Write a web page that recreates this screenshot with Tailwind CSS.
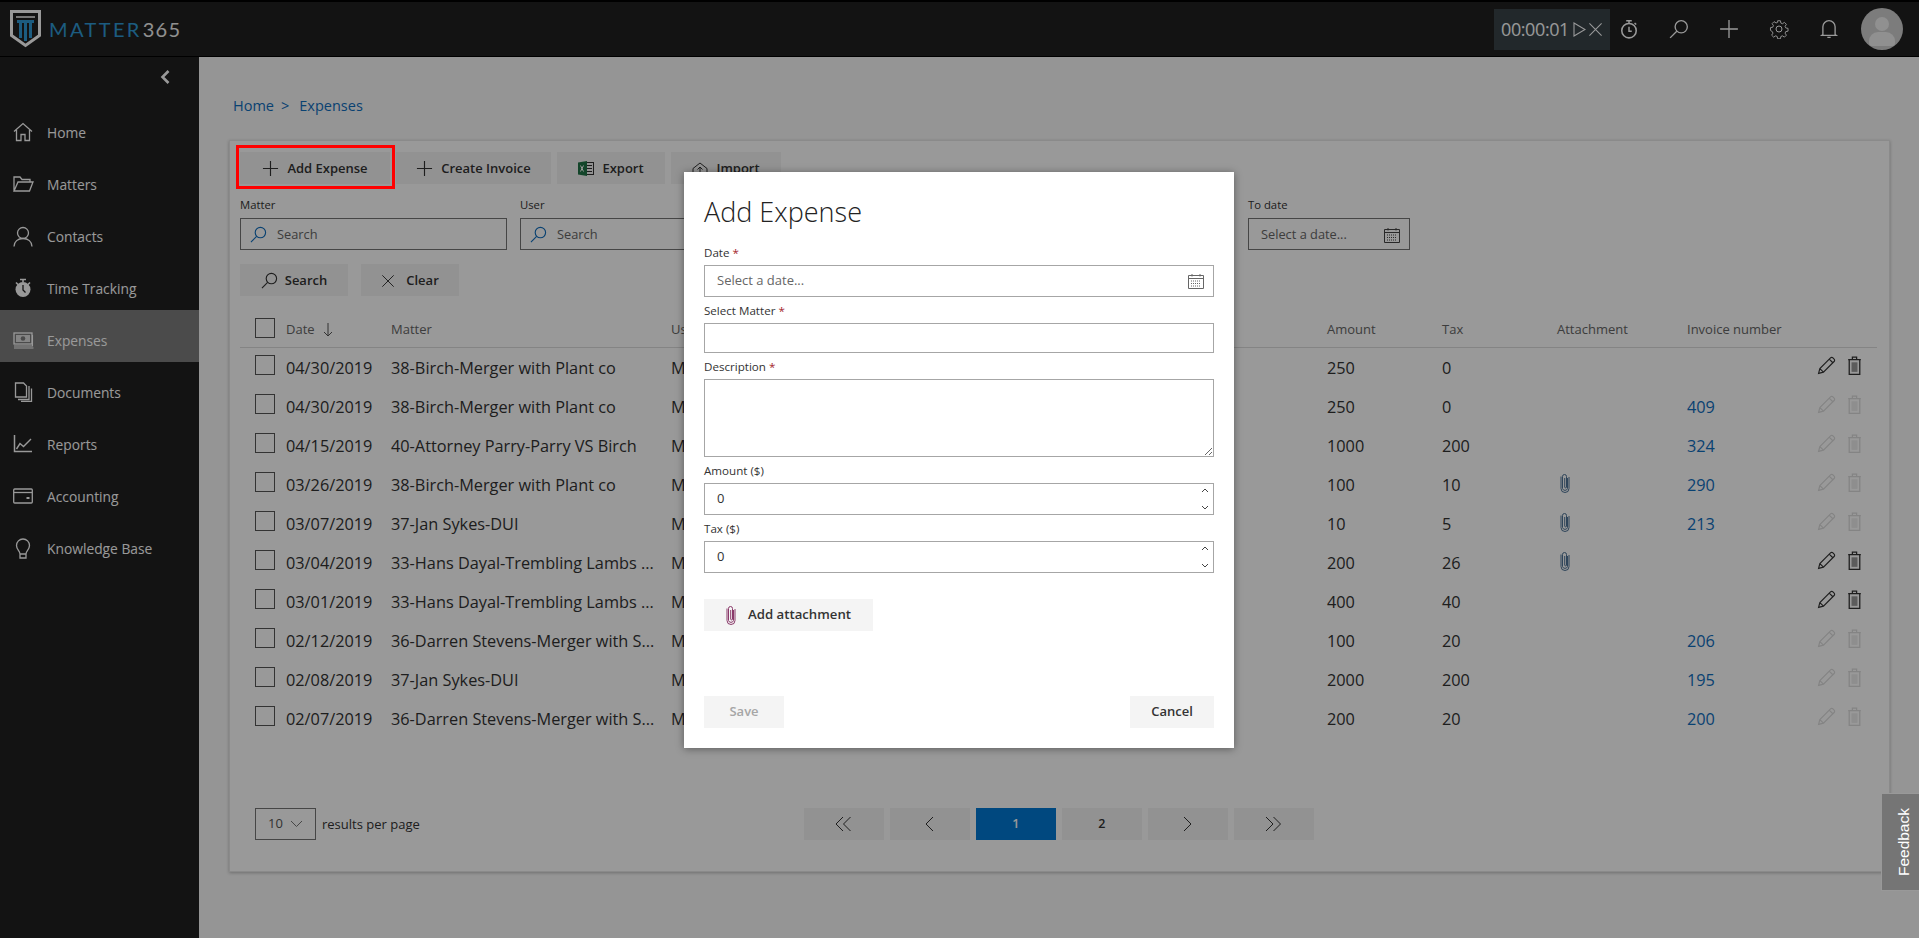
<!DOCTYPE html>
<html lang="en">
<head>
<meta charset="utf-8">
<title>Matter365 Expenses</title>
<script src="https://cdn.jsdelivr.net/npm/@tailwindcss/browser@4"></script>
</head>
<body class="m-0 overflow-hidden">
<svg class="hidden" width="0" height="0">
  <symbol id="pencil" viewBox="0 0 18 18"><path d="M1.500 16.500l1.200-4.600L12.800 1.800a1.600 1.600 0 0 1 2.300 0l1.100 1.100a1.600 1.600 0 0 1 0 2.300L6.100 15.300zM2.700 11.900l3.400 3.400M11.600 3l3.400 3.400" fill="none" stroke="currentColor" stroke-width="1.100"/></symbol>
  <symbol id="trash" viewBox="0 0 14 18"><path d="M1 3.500h12M5 3.500V1h4v2.500M2 3.500v14h10v-14" fill="none" stroke="currentColor" stroke-width="1.200"/><rect x="4.200" y="6" width="5.600" height="9" fill="currentColor" opacity=".5"/></symbol>
  <symbol id="clip" viewBox="0 0 10 20"><path d="M7.500 5v10.500a2.600 2.600 0 0 1-5 0V3.500a2 2 0 0 1 4 0V14a.9.9 0 0 1-1.800 0V5M9 4v11.500a4 4 0 0 1-8 0V3.500" fill="none" stroke="currentColor" stroke-width="1"/></symbol>
  <symbol id="loupe" viewBox="0 0 18 18"><circle cx="11" cy="7" r="5.500" fill="none" stroke="currentColor" stroke-width="1.200"/><path d="M7 11L1 17" fill="none" stroke="currentColor" stroke-width="1.200"/></symbol>
  <symbol id="plus" viewBox="0 0 18 18"><path d="M9 1v16M1 9h16" fill="none" stroke="currentColor" stroke-width="1.200"/></symbol>
  <symbol id="cal" viewBox="0 0 16 16"><path d="M.5 2.500h15v13H.5zM.5 5.500h15M4 1v2.500M12 1v2.500" fill="none" stroke="currentColor"/><path d="M3 8h10M3 10.500h10M3 13h10" fill="none" stroke="currentColor" stroke-dasharray="1 1"/></symbol>
  <symbol id="xmark" viewBox="0 0 16 16"><path d="M1.500 1.500l13 13M14.500 1.500l-13 13" fill="none" stroke="currentColor" stroke-width="1.100"/></symbol>
</svg>

<div class="relative flex flex-col w-[1919px] h-[938px] font-['Open_Sans',sans-serif] text-[#333] bg-[#f8f8f8]">
  <!-- header -->
  <header class="flex items-center h-[57px] shrink-0 bg-[#212121] border-t-2 border-b border-t-[#000] border-b-[#000] pl-[10px]">
    <svg width="31" height="38" viewBox="0 0 31 38" class="shrink-0">
      <path d="M1.500 1.500h28v24l-14 10-14-10z" fill="none" stroke="#fff" stroke-width="3"/>
      <path d="M6 7h19" stroke="#fff" stroke-width="1.500"/>
      <path d="M7 10h17v3H7zM9 13h3v15H9zM14 13h3v18h-3zM19 13h3v15h-3z" fill="#2f9ad6"/>
    </svg>
    <div class="flex items-center ml-[8px] font-['Lato',sans-serif] text-[20px] tracking-[2.400px] leading-none">
      <span class="text-[#2f9ad6]">MATTER</span><span class="text-[#f0f0f0] ml-[1px] tracking-[1.200px]">365</span>
    </div>
    <div class="ml-auto flex items-center h-[41px] w-[116px] bg-[#394349] text-[#ffffff] pl-[7px] mr-[9px]">
      <span class="text-[18px] tracking-[-0.400px]">00:00:01</span>
      <svg width="13" height="15" viewBox="0 0 13 15" class="ml-[4px]"><path d="M1 1l11 6.500L1 14z" fill="none" stroke="#fff" stroke-width="1.100"/></svg>
      <svg width="15" height="15" class="ml-[2px] text-white"><use href="#xmark"/></svg>
    </div>
    <div class="flex items-center gap-[30px] text-white mr-[22px]">
      <svg width="20" height="20" viewBox="0 0 18 18"><circle cx="9" cy="10.500" r="6.500" fill="none" stroke="currentColor" stroke-width="1.400"/><path d="M6.500 1.500h5M9 1.500V4M9 7v4h2.500M14 3.500l1.500 1.500" fill="none" stroke="currentColor" stroke-width="1.300"/></svg>
      <svg width="20" height="20"><use href="#loupe"/></svg>
      <svg width="20" height="20"><use href="#plus"/></svg>
      <svg width="20" height="20" viewBox="0 0 20 20"><circle cx="10" cy="10" r="3" fill="none" stroke="currentColor"/><path d="M8.500 1h3l.5 2.500 1.700.7 2.200-1.400 2.100 2.100-1.400 2.200.7 1.700 2.500.5v3l-2.500.5-.7 1.700 1.400 2.200-2.100 2.100-2.200-1.400-1.700.7-.5 2.500h-3l-.5-2.500-1.700-.7-2.200 1.400-2.100-2.100 1.400-2.200-.7-1.700L.7 11.500v-3l2.500-.5.7-1.700-1.400-2.200 2.100-2.100 2.200 1.400 1.700-.7z" fill="none" stroke="currentColor" transform="scale(.92) translate(.9 .9)"/></svg>
      <svg width="20" height="20" viewBox="0 0 18 18"><path d="M3.500 14V7a5.500 5.500 0 0 1 11 0v7l1 .8h-13zM7.500 16.500h3" fill="none" stroke="currentColor" stroke-width="1.200"/></svg>
    </div>
    <div class="relative w-[42px] h-[42px] rounded-full bg-[#cfcfcf] overflow-hidden mr-[16px]">
      <div class="absolute left-[14px] top-[9px] w-[14px] h-[14px] rounded-full bg-[#f0f0f0]"></div>
      <div class="absolute left-[8px] top-[24px] w-[26px] h-[14px] rounded-t-[9px] rounded-b-[3px] bg-[#f0f0f0]"></div>
    </div>
  </header>

  <div class="flex flex-1 min-h-0">
    <!-- sidebar -->
    <aside class="w-[199px] shrink-0 bg-[#212121] text-white text-[13.800px]">
      <div class="flex justify-end h-[45px] pt-[12px] pr-[28px]">
        <svg width="12" height="16" viewBox="0 0 12 16"><path d="M9.500 2L3.500 8l6 6" fill="none" stroke="#fff" stroke-width="2.600"/></svg>
      </div>
      <nav class="flex flex-col">
        <a class="flex items-center h-[52px] pl-[13px] pt-[10px]"><svg width="20" height="20" viewBox="0 0 20 20" class="mr-[14px] -mt-[2px]"><path d="M1 9.500L10 1.500l9 8M3.500 8v10.500h4.500v-6h4v6h4.500V8" fill="none" stroke="#fff" stroke-width="1.300"/></svg>Home</a>
        <a class="flex items-center h-[52px] pl-[13px] pt-[10px]"><svg width="21" height="18" viewBox="0 0 21 18" class="mr-[13px] -mt-[2px]"><path d="M1 16V2h6l2 2.500h8V7M1 16h15.500L20 7H5z" fill="none" stroke="#fff" stroke-width="1.300"/></svg>Matters</a>
        <a class="flex items-center h-[52px] pl-[13px] pt-[10px]"><svg width="20" height="21" viewBox="0 0 20 21" class="mr-[14px] -mt-[2px]"><circle cx="10" cy="7" r="5.500" fill="none" stroke="#fff" stroke-width="1.300"/><path d="M1 20.500c0-5 4-8 9-8s9 3 9 8" fill="none" stroke="#fff" stroke-width="1.300"/></svg>Contacts</a>
        <a class="flex items-center h-[52px] pl-[13px] pt-[10px]"><svg width="20" height="20" viewBox="0 0 20 20" class="mr-[14px] -mt-[2px]"><circle cx="10" cy="11.500" r="7.500" fill="#fff"/><path d="M7 1.500h6M10 1.500V4M3 4.500l2 2M17 4.500l-2 2" stroke="#fff" stroke-width="1.600"/><path d="M10 7v5l2.500 2.500" fill="none" stroke="#212121" stroke-width="1.300"/></svg>Time Tracking</a>
        <a class="flex items-center h-[52px] pl-[13px] pt-[10px] bg-[#7d7d7d]"><svg width="21" height="17" viewBox="0 0 21 17" class="mr-[13px] -mt-[2px]"><rect x="1" y="1" width="18" height="11" fill="none" stroke="#fff" stroke-width="1.300"/><rect x="3" y="3" width="14" height="7" fill="#fff" opacity=".75"/><circle cx="10" cy="6.500" r="2.300" fill="#7d7d7d"/><path d="M1 14h18.500V3M1 16h19.500" fill="none" stroke="#fff" stroke-width="1.100"/></svg>Expenses</a>
        <a class="flex items-center h-[52px] pl-[13px] pt-[10px]"><svg width="20" height="20" viewBox="0 0 20 20" class="mr-[14px] -mt-[2px]"><path d="M2.500 1h8l3 3v11h-11zM16 4v13.500H5M18.500 6.500V19.500H8" fill="none" stroke="#fff" stroke-width="1.300"/></svg>Documents</a>
        <a class="flex items-center h-[52px] pl-[13px] pt-[10px]"><svg width="20" height="20" viewBox="0 0 20 20" class="mr-[14px] -mt-[2px]"><path d="M1.500 1v16.500H19" fill="none" stroke="#fff" stroke-width="1.500"/><path d="M3.500 15l3.500-5.500 3.500 3L18 5" fill="none" stroke="#fff" stroke-width="1.400"/></svg>Reports</a>
        <a class="flex items-center h-[52px] pl-[13px] pt-[10px]"><svg width="20" height="16" viewBox="0 0 20 16" class="mr-[14px] -mt-[2px]"><rect x=".7" y="1" width="18.600" height="14" rx="1" fill="none" stroke="#fff" stroke-width="1.300"/><path d="M1 4.500h18" stroke="#fff" stroke-width="1.300"/><rect x="13.500" y="9" width="3" height="2" fill="#fff"/></svg>Accounting</a>
        <a class="flex items-center h-[52px] pl-[13px] pt-[10px]"><svg width="20" height="21" viewBox="0 0 20 21" class="mr-[14px] -mt-[2px]"><path d="M7 16c0-3-3.500-4.500-3.500-8.500a6.500 6.500 0 0 1 13 0C16.500 11.500 13 13 13 16zM7 16v4h6v-4" fill="none" stroke="#fff" stroke-width="1.300"/></svg>Knowledge Base</a>
      </nav>
    </aside>

    <!-- main -->
    <main class="flex-1 min-w-0 pl-[30px] pt-[37px]">
      <div class="flex pl-[4px] h-[24px] items-center text-[14.500px] text-[#106ebe]"><span>Home</span><span class="ml-[7px]">&gt;</span><span class="ml-[10px]">Expenses</span></div>
      <section class="mt-[22px] w-[1661px] h-[732px] bg-white border border-[#e6e6e6] shadow-[0_1px_3px_rgba(0,0,0,.25)] pt-[11px] pl-[10px]">
        <div class="flex gap-[6px] text-[13px] font-semibold">
          <button class="flex items-center justify-center gap-[8px] w-[150px] h-[32px] pt-[1px] bg-[#f4f4f4]"><svg width="17" height="17" class="text-[#333]"><use href="#plus"/></svg>Add Expense</button>
          <button class="flex items-center justify-center gap-[8px] w-[155px] h-[32px] pt-[1px] bg-[#f4f4f4]"><svg width="17" height="17" class="text-[#333]"><use href="#plus"/></svg>Create Invoice</button>
          <button class="flex items-center justify-center gap-[8px] w-[108px] h-[32px] pt-[1px] bg-[#f4f4f4]"><svg width="16" height="15" viewBox="0 0 16 15"><rect x="6" y="1.500" width="9.500" height="12" fill="none" stroke="#333"/><path d="M9 4.500h5M9 7.500h5M9 10.500h5" stroke="#333"/><path d="M0 1.500l9-1.500v15l-9-1.500z" fill="#217346"/><path d="M2.500 4.500l3 6M5.500 4.500l-3 6" stroke="#fff"/></svg>Export</button>
          <button class="flex items-center justify-center gap-[8px] w-[110px] h-[32px] pt-[1px] bg-[#f4f4f4]"><svg width="16" height="14" viewBox="0 0 16 14"><path d="M1 6.500L8 1l7 5.500v6.500H1zM8 11V5M5.500 7.500L8 5l2.500 2.500" fill="none" stroke="#333"/></svg>Import</button>
        </div>
        <div class="flex mt-[8px]">
          <div class="w-[267px]">
            <div class="h-[26px] flex items-center text-[11.300px]">Matter</div>
            <div class="flex items-center h-[32px] border border-[#767676] pl-[9px] pt-[1px] text-[12.800px] text-[#666]"><svg width="17" height="17" class="text-[#106ebe] mr-[10px]"><use href="#loupe"/></svg>Search</div>
          </div>
          <div class="w-[267px] ml-[13px]">
            <div class="h-[26px] flex items-center text-[11.300px]">User</div>
            <div class="flex items-center h-[32px] border border-[#767676] pl-[9px] pt-[1px] text-[12.800px] text-[#666]"><svg width="17" height="17" class="text-[#106ebe] mr-[10px]"><use href="#loupe"/></svg>Search</div>
          </div>
          <div class="w-[162px] ml-[461px]">
            <div class="h-[26px] flex items-center text-[11.300px]">To date</div>
            <div class="flex items-center justify-between h-[32px] border border-[#767676] pl-[12px] pr-[9px] pt-[1px] text-[12.800px] text-[#666]">Select a date...<svg width="16" height="16" class="text-[#444]"><use href="#cal"/></svg></div>
          </div>
        </div>
        <div class="flex gap-[13px] mt-[14px] text-[13px] font-semibold">
          <button class="flex items-center justify-center gap-[7px] w-[108px] h-[32px] pt-[1px] bg-[#f4f4f4]"><svg width="17" height="17" class="text-[#333]"><use href="#loupe"/></svg>Search</button>
          <button class="flex items-center justify-center gap-[11px] w-[98px] h-[32px] pt-[1px] bg-[#f4f4f4]"><svg width="14" height="14" class="text-[#333]"><use href="#xmark"/></svg>Clear</button>
        </div>

        <!-- table -->
        <div class="mt-[13px] w-[1637px] text-[16.300px]">
          <div class="grid grid-cols-[31px_105px_280px_656px_115px_115px_130px_130px_60px] items-center h-[39px] border-b border-[#dcdcdc] pl-[15px] pt-[3px] text-[13px] text-[#666]">
            <span class="w-[20px] h-[20px] border border-[#555] bg-white -mt-[3px]"></span>
            <span class="flex items-center gap-[8px]">Date <svg width="10" height="15" viewBox="0 0 10 15"><path d="M5 1v13M1 10l4 4 4-4" fill="none" stroke="#555"/></svg></span>
            <span>Matter</span><span>Us</span><span>Amount</span><span>Tax</span><span>Attachment</span><span>Invoice number</span><span></span>
          </div>
          <div class="grid grid-cols-[31px_105px_280px_656px_115px_115px_130px_130px_60px] items-center h-[39px] pl-[15px] pt-[2px]"><span class="w-[20px] h-[20px] border border-[#555] bg-white -mt-[7px]"></span><span>04/30/2019</span><span>38-Birch-Merger with Plant co</span><span>M</span><span>250</span><span>0</span><span></span><span></span><span class="flex items-center gap-[11px] text-[#333] -mt-[7px]"><svg width="19" height="19"><use href="#pencil"/></svg><svg width="15" height="19"><use href="#trash"/></svg></span></div>
          <div class="grid grid-cols-[31px_105px_280px_656px_115px_115px_130px_130px_60px] items-center h-[39px] pl-[15px] pt-[2px]"><span class="w-[20px] h-[20px] border border-[#555] bg-white -mt-[7px]"></span><span>04/30/2019</span><span>38-Birch-Merger with Plant co</span><span>M</span><span>250</span><span>0</span><span></span><span class="text-[#106ebe]">409</span><span class="flex items-center gap-[11px] text-[#dcdcdc] -mt-[7px]"><svg width="19" height="19"><use href="#pencil"/></svg><svg width="15" height="19"><use href="#trash"/></svg></span></div>
          <div class="grid grid-cols-[31px_105px_280px_656px_115px_115px_130px_130px_60px] items-center h-[39px] pl-[15px] pt-[2px]"><span class="w-[20px] h-[20px] border border-[#555] bg-white -mt-[7px]"></span><span>04/15/2019</span><span>40-Attorney Parry-Parry VS Birch</span><span>M</span><span>1000</span><span>200</span><span></span><span class="text-[#106ebe]">324</span><span class="flex items-center gap-[11px] text-[#dcdcdc] -mt-[7px]"><svg width="19" height="19"><use href="#pencil"/></svg><svg width="15" height="19"><use href="#trash"/></svg></span></div>
          <div class="grid grid-cols-[31px_105px_280px_656px_115px_115px_130px_130px_60px] items-center h-[39px] pl-[15px] pt-[2px]"><span class="w-[20px] h-[20px] border border-[#555] bg-white -mt-[7px]"></span><span>03/26/2019</span><span>38-Birch-Merger with Plant co</span><span>M</span><span>100</span><span>10</span><svg width="10" height="20" class="ml-[3px] -mt-[5px] text-[#4f7396]"><use href="#clip"/></svg><span class="text-[#106ebe]">290</span><span class="flex items-center gap-[11px] text-[#dcdcdc] -mt-[7px]"><svg width="19" height="19"><use href="#pencil"/></svg><svg width="15" height="19"><use href="#trash"/></svg></span></div>
          <div class="grid grid-cols-[31px_105px_280px_656px_115px_115px_130px_130px_60px] items-center h-[39px] pl-[15px] pt-[2px]"><span class="w-[20px] h-[20px] border border-[#555] bg-white -mt-[7px]"></span><span>03/07/2019</span><span>37-Jan Sykes-DUI</span><span>M</span><span>10</span><span>5</span><svg width="10" height="20" class="ml-[3px] -mt-[5px] text-[#4f7396]"><use href="#clip"/></svg><span class="text-[#106ebe]">213</span><span class="flex items-center gap-[11px] text-[#dcdcdc] -mt-[7px]"><svg width="19" height="19"><use href="#pencil"/></svg><svg width="15" height="19"><use href="#trash"/></svg></span></div>
          <div class="grid grid-cols-[31px_105px_280px_656px_115px_115px_130px_130px_60px] items-center h-[39px] pl-[15px] pt-[2px]"><span class="w-[20px] h-[20px] border border-[#555] bg-white -mt-[7px]"></span><span>03/04/2019</span><span>33-Hans Dayal-Trembling Lambs ...</span><span>M</span><span>200</span><span>26</span><svg width="10" height="20" class="ml-[3px] -mt-[5px] text-[#4f7396]"><use href="#clip"/></svg><span></span><span class="flex items-center gap-[11px] text-[#333] -mt-[7px]"><svg width="19" height="19"><use href="#pencil"/></svg><svg width="15" height="19"><use href="#trash"/></svg></span></div>
          <div class="grid grid-cols-[31px_105px_280px_656px_115px_115px_130px_130px_60px] items-center h-[39px] pl-[15px] pt-[2px]"><span class="w-[20px] h-[20px] border border-[#555] bg-white -mt-[7px]"></span><span>03/01/2019</span><span>33-Hans Dayal-Trembling Lambs ...</span><span>M</span><span>400</span><span>40</span><span></span><span></span><span class="flex items-center gap-[11px] text-[#333] -mt-[7px]"><svg width="19" height="19"><use href="#pencil"/></svg><svg width="15" height="19"><use href="#trash"/></svg></span></div>
          <div class="grid grid-cols-[31px_105px_280px_656px_115px_115px_130px_130px_60px] items-center h-[39px] pl-[15px] pt-[2px]"><span class="w-[20px] h-[20px] border border-[#555] bg-white -mt-[7px]"></span><span>02/12/2019</span><span>36-Darren Stevens-Merger with S...</span><span>M</span><span>100</span><span>20</span><span></span><span class="text-[#106ebe]">206</span><span class="flex items-center gap-[11px] text-[#dcdcdc] -mt-[7px]"><svg width="19" height="19"><use href="#pencil"/></svg><svg width="15" height="19"><use href="#trash"/></svg></span></div>
          <div class="grid grid-cols-[31px_105px_280px_656px_115px_115px_130px_130px_60px] items-center h-[39px] pl-[15px] pt-[2px]"><span class="w-[20px] h-[20px] border border-[#555] bg-white -mt-[7px]"></span><span>02/08/2019</span><span>37-Jan Sykes-DUI</span><span>M</span><span>2000</span><span>200</span><span></span><span class="text-[#106ebe]">195</span><span class="flex items-center gap-[11px] text-[#dcdcdc] -mt-[7px]"><svg width="19" height="19"><use href="#pencil"/></svg><svg width="15" height="19"><use href="#trash"/></svg></span></div>
          <div class="grid grid-cols-[31px_105px_280px_656px_115px_115px_130px_130px_60px] items-center h-[39px] pl-[15px] pt-[2px]"><span class="w-[20px] h-[20px] border border-[#555] bg-white -mt-[7px]"></span><span>02/07/2019</span><span>36-Darren Stevens-Merger with S...</span><span>M</span><span>200</span><span>20</span><span></span><span class="text-[#106ebe]">200</span><span class="flex items-center gap-[11px] text-[#dcdcdc] -mt-[7px]"><svg width="19" height="19"><use href="#pencil"/></svg><svg width="15" height="19"><use href="#trash"/></svg></span></div>
        </div>

        <!-- pagination -->
        <div class="flex items-center mt-[70px] pl-[15px]">
          <div class="flex items-center justify-between w-[61px] h-[32px] border border-[#767676] pl-[12px] pr-[12px] text-[13px] text-[#555]">10<svg width="13" height="8" viewBox="0 0 13 8"><path d="M1 1l5.500 5.500L12 1" fill="none" stroke="#777"/></svg></div>
          <span class="ml-[6px] text-[13px] pt-[1px]">results per page</span>
          <div class="flex gap-[6px] ml-[384px]">
            <button class="flex items-center justify-center w-[80px] h-[32px] bg-[#f4f4f4]"><svg width="17" height="16" viewBox="0 0 17 16"><path d="M8 1L1 8l7 7M15.500 1l-7 7 7 7" fill="none" stroke="#333"/></svg></button>
            <button class="flex items-center justify-center w-[80px] h-[32px] bg-[#f4f4f4]"><svg width="9" height="16" viewBox="0 0 9 16"><path d="M8 1L1 8l7 7" fill="none" stroke="#333"/></svg></button>
            <button class="w-[80px] h-[32px] bg-[#0078d4] text-white text-[12.500px] font-semibold">1</button>
            <button class="w-[80px] h-[32px] bg-[#f4f4f4] text-[12.500px] font-semibold">2</button>
            <button class="flex items-center justify-center w-[80px] h-[32px] bg-[#f4f4f4]"><svg width="9" height="16" viewBox="0 0 9 16"><path d="M1 1l7 7-7 7" fill="none" stroke="#333"/></svg></button>
            <button class="flex items-center justify-center w-[80px] h-[32px] bg-[#f4f4f4]"><svg width="17" height="16" viewBox="0 0 17 16"><path d="M1 1l7 7-7 7M8.500 1l7 7-7 7" fill="none" stroke="#333"/></svg></button>
          </div>
        </div>
      </section>
    </main>
  </div>

  <!-- dim layer -->
  <div class="absolute inset-0 bg-black/40 z-10"></div>

  <!-- annotation -->
  <div class="absolute left-[236px] top-[145px] w-[159px] h-[44px] border-[3px] border-[#ff0000] z-20"></div>

  <!-- feedback -->
  <div class="absolute right-0 top-[793px] w-[38px] h-[98px] z-20 flex items-center justify-center pl-[6px] bg-[#757575] border border-[#999] border-r-0 text-white font-['Liberation_Sans',sans-serif] text-[15.500px]"><span class="[writing-mode:vertical-rl] rotate-180">Feedback</span></div>

  <!-- modal -->
  <div class="absolute left-[684px] top-[172px] w-[550px] h-[576px] z-20 flex flex-col bg-white px-[20px] shadow-[0_1px_8px_rgba(0,0,0,.4)] text-[#333]">
    <h2 class="h-[67px] pt-[20px] text-[27px] leading-[40px] font-light text-[#222]">Add Expense</h2>
    <div class="h-[26px] flex items-center pt-[1px] text-[11.600px]">Date&nbsp;<span class="text-[#a4262c]">*</span></div>
    <div class="flex items-center justify-between h-[32px] border border-[#a6a6a6] pl-[12px] pr-[9px] text-[13px] text-[#666]">Select a date...<svg width="16" height="16" class="text-[#666]"><use href="#cal"/></svg></div>
    <div class="h-[26px] flex items-center pt-[1px] text-[11.600px]">Select Matter&nbsp;<span class="text-[#a4262c]">*</span></div>
    <div class="h-[30px] border border-[#a6a6a6]"></div>
    <div class="h-[26px] flex items-center pt-[1px] text-[11.600px]">Description&nbsp;<span class="text-[#a4262c]">*</span></div>
    <textarea class="block h-[78px] w-full border border-[#a6a6a6] outline-none" aria-label="Description"></textarea>
    <div class="h-[26px] flex items-center pt-[1px] text-[11.600px]">Amount ($)</div>
    <div class="flex items-center justify-between h-[32px] border border-[#a6a6a6] pl-[12px] pr-[4px] text-[13px]">0
      <svg width="8" height="24" viewBox="0 0 8 24"><path d="M1 5l3-3 3 3M1 19l3 3 3-3" fill="none" stroke="#444"/></svg>
    </div>
    <div class="h-[26px] flex items-center pt-[1px] text-[11.600px]">Tax ($)</div>
    <div class="flex items-center justify-between h-[32px] border border-[#a6a6a6] pl-[12px] pr-[4px] text-[13px]">0
      <svg width="8" height="24" viewBox="0 0 8 24"><path d="M1 5l3-3 3 3M1 19l3 3 3-3" fill="none" stroke="#444"/></svg>
    </div>
    <button class="mt-[26px] flex items-center justify-center gap-[12px] w-[169px] h-[32px] bg-[#f4f4f4] text-[13.200px] font-semibold"><svg width="10" height="20" class="text-[#8a3a6a]"><use href="#clip"/></svg>Add attachment</button>
    <div class="mt-auto mb-[20px] flex justify-between">
      <button class="w-[80px] h-[32px] bg-[#f4f4f4] text-[13px] font-semibold text-[#a6a6a6]">Save</button>
      <button class="w-[84px] h-[32px] bg-[#f4f4f4] text-[13px] font-semibold">Cancel</button>
    </div>
  </div>
</div>
</body>
</html>
